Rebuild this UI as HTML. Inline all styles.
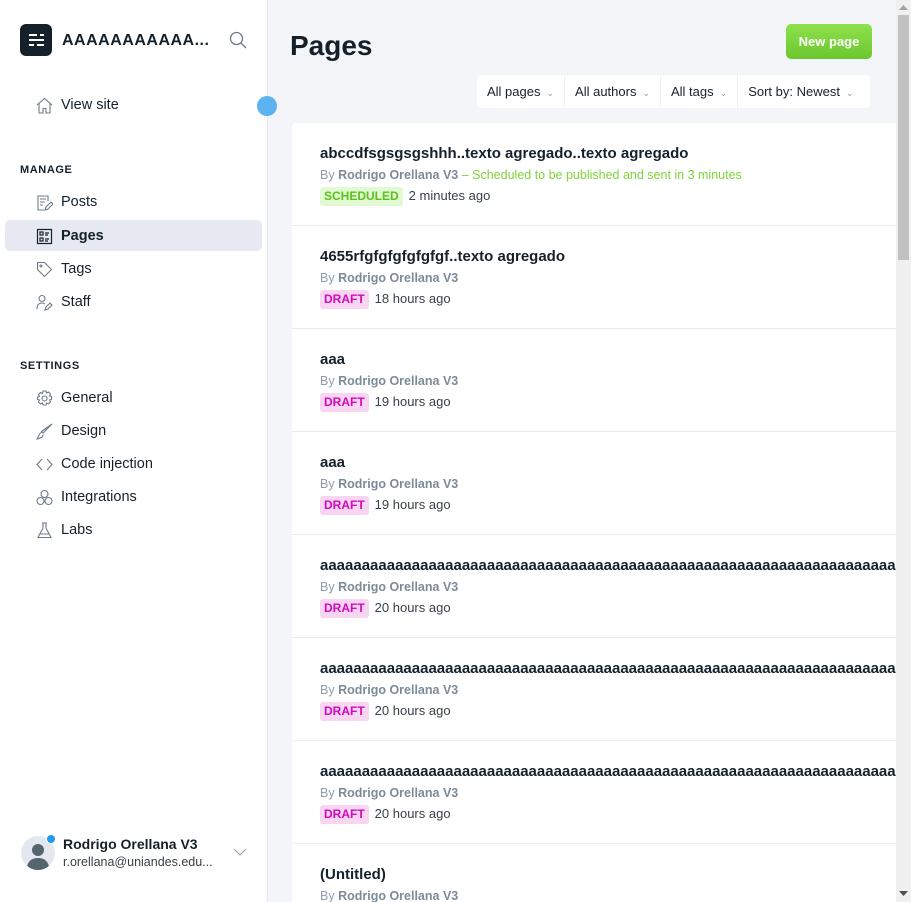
<!DOCTYPE html>
<html><head><meta charset="utf-8"><style>
*{box-sizing:border-box;margin:0;padding:0}
html,body{width:911px;height:902px;overflow:hidden}
body{font-family:"Liberation Sans",sans-serif;background:#f4f5f8;position:relative;color:#15212a}
.side{position:absolute;left:0;top:0;width:268px;height:902px;background:#fff;border-right:1px solid #e5e9ed}
.logo{position:absolute;left:20px;top:24px;width:32px;height:32px;background:#15212a;border-radius:6px}
.logo i{position:absolute;height:2px;background:#fff;left:9px}
.site{position:absolute;left:62px;top:32px;font-weight:bold;font-size:16px;letter-spacing:.5px;color:#15212a}
.nav{position:absolute;left:5px;width:257px;height:31px;border-radius:5px;font-size:14.5px;color:#15212a;line-height:33px;padding-left:56px}
.nav svg{position:absolute;left:31px;top:8px}
.nav.act{background:#e6e9f1;font-weight:bold}
.hd{position:absolute;left:20px;font-size:11px;font-weight:bold;letter-spacing:.6px;color:#15212a}
h1{position:absolute;left:290px;top:30px;font-size:28px;font-weight:bold;color:#15212a}
.btn{position:absolute;left:786px;top:24px;width:86px;height:35px;border-radius:5px;background:linear-gradient(#8ee14c,#6cc72f);color:#fff;font-weight:bold;font-size:13px;text-align:center;line-height:35px}
.filt{position:absolute;left:477px;top:75px;width:393px;height:33px;background:#fff;border-radius:4px;display:flex;font-size:13px;color:#15212a;line-height:33px}
.filt div{border-right:1px solid #eef0f2;padding:0 10px}
.filt div:last-child{border:none}
.filt span{font-size:9px;color:#8e9cac;margin-left:6px}
.list{position:absolute;left:292px;top:123px;width:604px;height:779px;background:#fff;border-radius:4px 0 0 0;overflow:hidden}
.row{height:103px;border-bottom:1px solid #e6ebef;padding:22px 0 0 28px;position:relative;white-space:nowrap;overflow:hidden}
.t{font-weight:bold;font-size:15px;color:#15212a;height:20px}
.by{font-size:12.5px;color:#8e9cac;height:22px;line-height:20px}
.by b{color:#7d8b99}
.b{display:inline-block;font-size:12px;font-weight:bold;padding:0 4px;height:19px;line-height:19px;border-radius:3px;margin-right:6px}
.dr{background:#f8d5f0;color:#d10bbd}
.sc{background:#e3f9d3;color:#5ac21c}
.tm{font-size:13px;color:#394047}
.sb{position:absolute;left:896px;top:0;width:15px;height:902px;background:#f0f0f0}
.th{position:absolute;left:898px;top:15px;width:11px;height:245px;background:#c1c1c1}
</style></head><body>
<div class="side">
<div class="logo"><i style="top:10px;width:8px"></i><i style="top:10px;left:20px;width:4px"></i><i style="top:15px;width:15px"></i><i style="top:20px;width:5px"></i><i style="top:20px;left:17px;width:7px"></i></div>
<div class="site">AAAAAAAAAAA...</div>
<svg style="position:absolute;left:229px;top:31px" width="18" height="18" viewBox="0 0 18 18" fill="none" stroke="#6d7b88" stroke-width="1.3"><circle cx="7.5" cy="7.5" r="6"/><path d="M12 12l5 5"/></svg>
<div class="nav" style="top:89px"><svg width="17" height="17" viewBox="0 0 17 17" fill="none" stroke="#6d7b88" stroke-width="1.1"><path d="M1 8L8.5 1.5 16 8M3 6.5V16h4v-4.5h3V16h4V6.5"/></svg>View site</div>
<div style="position:absolute;left:257px;top:96px;width:20px;height:20px;border-radius:50%;background:#5db3f2"></div>
<div class="hd" style="top:164px">MANAGE</div>
<div class="nav" style="top:186px"><svg width="17" height="17" viewBox="0 0 17 17" fill="none" stroke="#6d7b88" stroke-width="1.1"><path d="M12 7V2H2v14h6M4 5h6M4 8h5M4 11h3M9 16l1-3 5-5 2 2-5 5z"/></svg>Posts</div>
<div class="nav act" style="top:220px"><svg width="17" height="17" viewBox="0 0 17 17" fill="none" stroke="#15212a" stroke-width="1.2"><rect x="1.5" y="1.5" width="14" height="14"/><rect x="4" y="4" width="3" height="3"/><rect x="4" y="10" width="3" height="3"/><path d="M9 5h4M9 7h3M9 11h4M9 13h3"/></svg>Pages</div>
<div class="nav" style="top:253px"><svg width="17" height="17" viewBox="0 0 17 17" fill="none" stroke="#6d7b88" stroke-width="1.1"><path d="M1.5 1.5h7l7 7-7 7-7-7z"/><circle cx="5" cy="5" r="1"/></svg>Tags</div>
<div class="nav" style="top:286px"><svg width="17" height="17" viewBox="0 0 17 17" fill="none" stroke="#6d7b88" stroke-width="1.1"><circle cx="6" cy="4.5" r="3"/><path d="M1 15c0-4 2-6 5-6 1 0 2 .3 3 1M9 16l1-3 4-4 2 2-4 4z"/></svg>Staff</div>
<div class="hd" style="top:360px">SETTINGS</div>
<div class="nav" style="top:382px"><svg width="17" height="17" viewBox="0 0 17 17" fill="none" stroke="#6d7b88" stroke-width="1.1"><circle cx="8.5" cy="8.5" r="2.5"/><path d="M7 1h3l.5 2 2-1 2 2-1 2 2 .5v3l-2 .5 1 2-2 2-2-1-.5 2H7l-.5-2-2 1-2-2 1-2-2-.5V7l2-.5-1-2 2-2 2 1z"/></svg>General</div>
<div class="nav" style="top:415px"><svg width="17" height="17" viewBox="0 0 17 17" fill="none" stroke="#6d7b88" stroke-width="1.1"><path d="M16 1L7 10l-1.5-1.5zM5.5 9.5C3 10 3 13 1 16c3-1 6-1 6-4.5"/></svg>Design</div>
<div class="nav" style="top:448px"><svg width="17" height="17" viewBox="0 0 17 17" fill="none" stroke="#6d7b88" stroke-width="1.1"><path d="M6 3L1 8.5 6 14M11 3l5 5.5-5 5.5"/></svg>Code injection</div>
<div class="nav" style="top:481px"><svg width="17" height="17" viewBox="0 0 17 17" fill="none" stroke="#6d7b88" stroke-width="1.1"><circle cx="8.5" cy="5" r="3.5"/><circle cx="4.5" cy="12" r="3.5"/><circle cx="12.5" cy="12" r="3.5"/></svg>Integrations</div>
<div class="nav" style="top:514px"><svg width="17" height="17" viewBox="0 0 17 17" fill="none" stroke="#6d7b88" stroke-width="1.1"><path d="M6 1h5M7 1v5L2 15.5h13L10 6V1M4 12h9"/></svg>Labs</div>
<div style="position:absolute;left:21px;top:836px;width:34px;height:34px;border-radius:50%;background:#e3e8ee;overflow:hidden"><div style="position:absolute;left:11px;top:8px;width:12px;height:12px;border-radius:50%;background:#56646e"></div><div style="position:absolute;left:6px;top:22px;width:22px;height:16px;border-radius:10px 10px 0 0;background:#56646e"></div></div>
<div style="position:absolute;left:46px;top:834px;width:10px;height:10px;border-radius:50%;background:#1e9bf0;border:1px solid #fff"></div>
<div style="position:absolute;left:63px;top:836px;font-size:14px;font-weight:bold">Rodrigo Orellana V3</div>
<div style="position:absolute;left:63px;top:855px;font-size:12.5px;color:#394047">r.orellana@uniandes.edu...</div>
<svg style="position:absolute;left:233px;top:848px" width="14" height="9" viewBox="0 0 14 9" fill="none" stroke="#8e9cac" stroke-width="1.1"><path d="M1 1l6 6 6-6"/></svg>
</div>
<h1>Pages</h1>
<div class="btn">New page</div>
<div class="filt"><div>All pages<span>&#8964;</span></div><div>All authors<span>&#8964;</span></div><div>All tags<span>&#8964;</span></div><div style="flex:1">Sort by: Newest<span>&#8964;</span></div></div>
<div class="list">
<div class="row"><div class="t">abccdfsgsgsgshhh..texto agregado..texto agregado</div><div class="by">By <b>Rodrigo Orellana V3</b> <span style="color:#7ed33c">– Scheduled to be published and sent in 3 minutes</span></div><span class="b sc">SCHEDULED</span><span class="tm">2 minutes ago</span></div>
<div class="row"><div class="t">4655rfgfgfgfgfgfgf..texto agregado</div><div class="by">By <b>Rodrigo Orellana V3</b></div><span class="b dr">DRAFT</span><span class="tm">18 hours ago</span></div>
<div class="row"><div class="t">aaa</div><div class="by">By <b>Rodrigo Orellana V3</b></div><span class="b dr">DRAFT</span><span class="tm">19 hours ago</span></div>
<div class="row"><div class="t">aaa</div><div class="by">By <b>Rodrigo Orellana V3</b></div><span class="b dr">DRAFT</span><span class="tm">19 hours ago</span></div>
<div class="row"><div class="t">aaaaaaaaaaaaaaaaaaaaaaaaaaaaaaaaaaaaaaaaaaaaaaaaaaaaaaaaaaaaaaaaaaaaaaaaaaaa</div><div class="by">By <b>Rodrigo Orellana V3</b></div><span class="b dr">DRAFT</span><span class="tm">20 hours ago</span></div>
<div class="row"><div class="t">aaaaaaaaaaaaaaaaaaaaaaaaaaaaaaaaaaaaaaaaaaaaaaaaaaaaaaaaaaaaaaaaaaaaaaaaaaaa</div><div class="by">By <b>Rodrigo Orellana V3</b></div><span class="b dr">DRAFT</span><span class="tm">20 hours ago</span></div>
<div class="row"><div class="t">aaaaaaaaaaaaaaaaaaaaaaaaaaaaaaaaaaaaaaaaaaaaaaaaaaaaaaaaaaaaaaaaaaaaaaaaaaaa</div><div class="by">By <b>Rodrigo Orellana V3</b></div><span class="b dr">DRAFT</span><span class="tm">20 hours ago</span></div>
<div class="row"><div class="t">(Untitled)</div><div class="by">By <b>Rodrigo Orellana V3</b></div></div>
</div>
<div class="sb"></div><div class="th"></div>
<svg style="position:absolute;left:899px;top:4px" width="9" height="6"><path d="M0 6L4.5 1 9 6z" fill="#a3a3a3"/></svg>
<svg style="position:absolute;left:899px;top:891px" width="9" height="6"><path d="M0 0L4.5 5 9 0z" fill="#505050"/></svg>
</body></html>
